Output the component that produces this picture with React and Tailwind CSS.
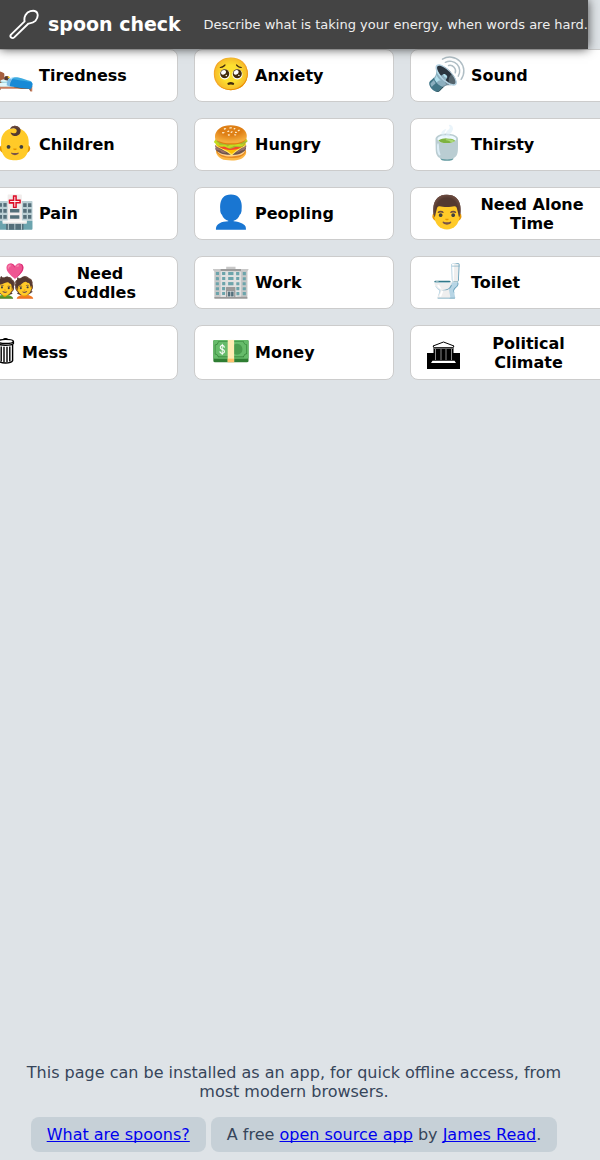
const SpoonLogo = () => (
  <svg viewBox="0 0 32 32" className="h-8 w-8 shrink-0" fill="none" stroke="white" strokeWidth="1.9" strokeLinejoin="round" aria-hidden="true">
    <path d="M16.6 12.4 C15.6 7.5 18.2 3.4 22.4 2.2 C25.4 1.4 28.2 2 29.2 4 C30.2 6.6 29.4 9.6 27.4 11.8 C25.4 13.8 23 14.2 20.2 14.8 L6.2 28.4 C4.2 30.2 1.2 28 3 25.6 Z" />
  </svg>
);

const TrashIcon = () => (
  <svg viewBox="0 0 23 32" className="h-8 w-[23px] shrink-0" fill="none" stroke="black" strokeWidth="1.4" aria-hidden="true">
    <ellipse cx="10.5" cy="4.4" rx="7.9" ry="2" />
    <path d="M8.5 2.6 C9 1.4 12 1.4 12.5 2.6" />
    <path d="M2.6 4.6 V6.6 C4.2 8.8 16.8 8.8 18.4 6.6 V4.6" />
    <path d="M3.4 7.6 V23.6 C5 26.8 16 26.8 17.6 23.6 V7.6" />
    <path d="M6.2 9.4 V24.4 M9 9.8 V25 M12 9.8 V25 M14.8 9.4 V24.4" />
  </svg>
);

const CapitolIcon = () => (
  <svg viewBox="0 0 33 32" className="h-8 w-[33px] shrink-0" aria-hidden="true">
    <path d="M0 16 H6.5 V10 H26.5 V16 H33 V32 H0 Z" fill="black" />
    <path d="M6 9 L16.5 5 L27 9 L26 10.5 H7 Z" fill="white" stroke="black" strokeWidth="1" />
    <path d="M7 11.2 H26" stroke="#999" strokeWidth="1" />
    <path d="M8.5 12 V23 M14 12 V23 M19 12 V23 M24.5 12 V23" stroke="#888" strokeWidth="1" />
    <path d="M5.5 23.8 H27.5 L29 26 H4 Z" fill="white" />
  </svg>
);

const causes = [
  { label: 'Tiredness', icon: '🛌' },
  { label: 'Anxiety', icon: '🥺' },
  { label: 'Sound', icon: '🔊' },
  { label: 'Children', icon: '👶' },
  { label: 'Hungry', icon: '🍔' },
  { label: 'Thirsty', icon: '🍵' },
  { label: 'Pain', icon: '🏥' },
  { label: 'Peopling', icon: '👤' },
  { label: 'Need Alone Time', icon: '👨' },
  { label: 'Need Cuddles', icon: '💑' },
  { label: 'Work', icon: '🏢' },
  { label: 'Toilet', icon: '🚽' },
  { label: 'Mess', drawing: <TrashIcon /> },
  { label: 'Money', icon: '💵' },
  { label: 'Political Climate', drawing: <CapitolIcon /> },
];

const CauseButton = ({ label, icon, drawing }) => (
  <button
    type="button"
    className="flex items-center gap-1 rounded-lg border border-[#ccc] bg-white px-4 text-center font-bold text-black"
  >
    {drawing ?? <span className="pb-1 text-[32px] leading-9" aria-hidden="true">{icon}</span>}
    <span className={label.includes(' ') ? 'flex-1' : ''}>{label}</span>
  </button>
);

const linkStyle = 'text-[#0000ee] underline [text-decoration-skip-ink:none]';

export default function App() {
  return (
    <div className="min-h-screen overflow-hidden bg-[#dee3e7] pr-3 font-['DejaVu_Sans',sans-serif] text-base leading-[19px] text-[#36455a]">
      <div className="flex min-h-screen flex-col">
        <header className="relative z-10 flex h-[49px] items-center justify-between bg-[#444] shadow-[0_0_10px_#444]">
          <div className="flex items-center gap-2 pl-2">
            <SpoonLogo />
            <h1 className="text-[19px] font-bold whitespace-nowrap text-white">spoon check</h1>
          </div>
          <p className="text-[13px] whitespace-nowrap text-[#eee]">
            Describe what is taking your energy, when words are hard.
          </p>
        </header>
        <main className="grid grid-cols-[repeat(3,200px)] grid-rows-[repeat(4,53px)_55px] justify-center gap-4">
          {causes.map((cause) => (
            <CauseButton key={cause.label} {...cause} />
          ))}
        </main>
        <footer className="mt-auto px-4 pb-2 text-center">
          <p>This page can be installed as an app, for quick offline access, from most modern browsers.</p>
          <div className="mt-4 flex flex-wrap justify-center gap-[5px]">
            <span className="rounded-lg bg-[#c6d0d7] px-4 py-2">
              <a href="#spoons" className={linkStyle}>What are spoons?</a>
            </span>
            <span className="rounded-lg bg-[#c6d0d7] px-4 py-2">
              A free <a href="#source" className={linkStyle}>open source app</a> by{' '}
              <a href="#author" className={linkStyle}>James Read</a>.
            </span>
          </div>
        </footer>
      </div>
    </div>
  );
}
